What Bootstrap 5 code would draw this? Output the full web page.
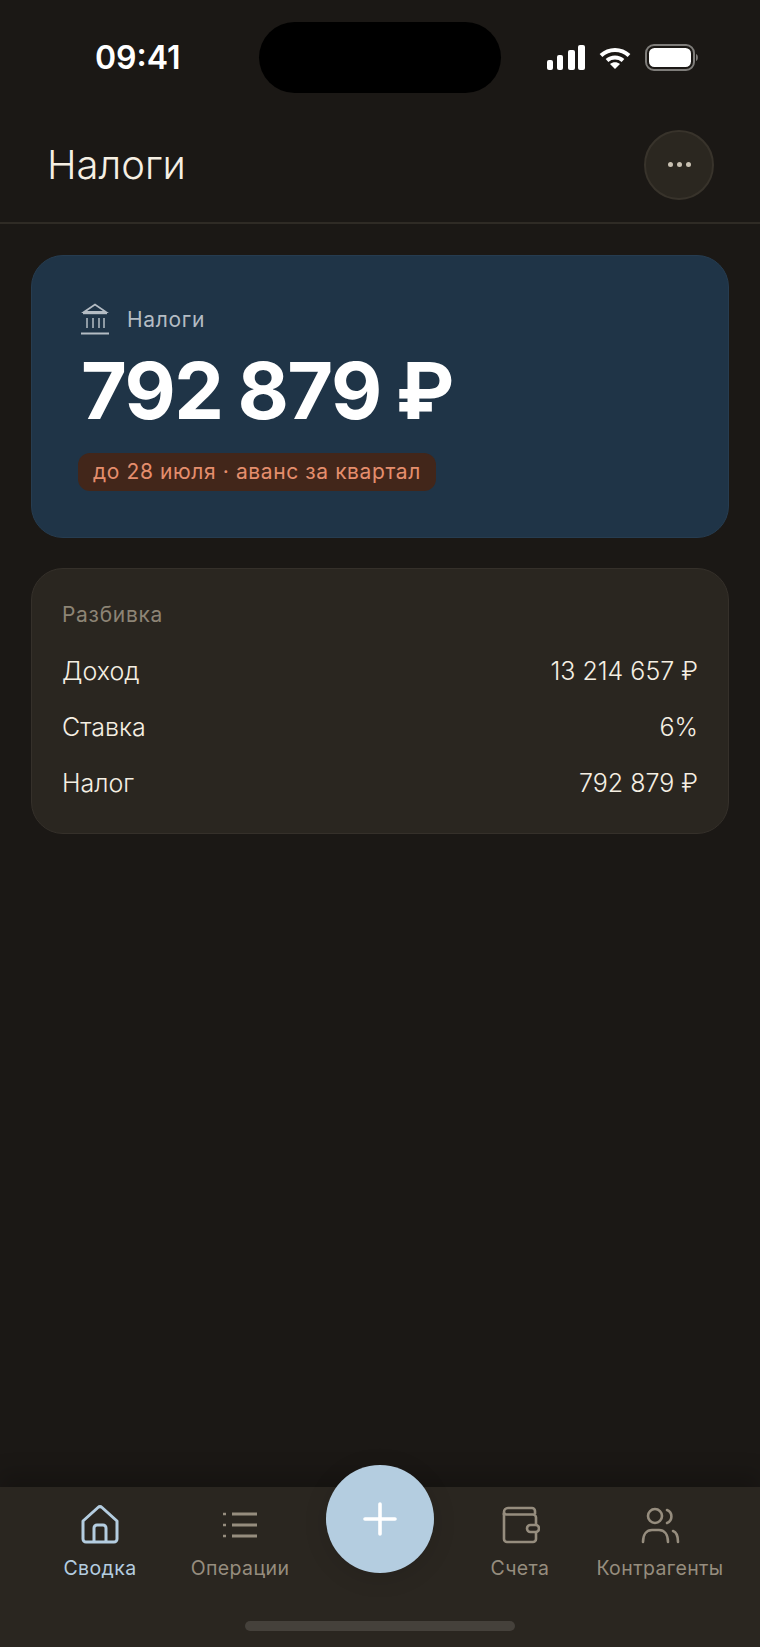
<!DOCTYPE html>
<html lang="ru">
<head>
    <meta charset="UTF-8">
    <meta name="viewport" content="width=device-width, initial-scale=1.0">
    <title>Налоги</title>
    <link href="https://cdn.jsdelivr.net/npm/bootstrap@5.3.0/dist/css/bootstrap.min.css" rel="stylesheet">
    <style>
        body {
            margin: 0;
            background-color: #1b1815;
            font-family: "Inter", "Liberation Sans", sans-serif;
            color: #f5efe3;
        }
        .app-screen { height: 1647px; width: 760px; position: relative; overflow: hidden; }
        .status-row { height: 115px; padding: 0 61px 0 95px; }
        .status-time { font-size: 32px; font-weight: 600; color: #fff; line-height: 1; width: 164px; }
        .island { width: 242px; height: 71px; border-radius: 36px; background: #000; margin-top: -1px; }
        .status-icons { margin-left: auto; gap: 14px; }
        .top-head { height: 109px; padding: 0 47px 8px; border-bottom: 2px solid #2f2b25; }
        .top-title { font-size: 40px; font-weight: 300; margin: 0; line-height: 1; color: #f5efe3; }
        .more-btn { width: 70px; height: 70px; margin-right: -1px; border-radius: 50%; background: #2b2720; border: 2px solid #38332b; padding: 0; gap: 4px; }
        .more-dot { width: 5px; height: 5px; border-radius: 50%; background: #c9c1b2; }
        .page-body { padding: 31px 31px 0; gap: 30px; }
        .tax-card { background: #1f3447; border-radius: 32px; height: 283px; padding: 47px 50px 0 49px; border: 1px solid #263c50; }
        .tax-label { font-size: 21px; letter-spacing: .7px; color: #b4bcc4; gap: 18px; line-height: 1; }
        .tax-sum { font-size: 79px; font-weight: 700; color: #fff; line-height: 1; margin-top: 16px; letter-spacing: -1.6px; word-spacing: -2px; }
        .due-tag { background: #42261a; color: #e58e6d; font-size: 21px; height: 38px; border-radius: 12px; padding: 0 15px; margin: 23px 0 0 -3px; letter-spacing: .6px; }
        .part-card { background: #2a2620; border: 1px solid #35302a; border-radius: 32px; height: 266px; padding: 35px 30px 0 30px; }
        .part-title { font-size: 21px; color: #8d8475; letter-spacing: .7px; line-height: 1; margin-bottom: 19px; }
        .part-row { height: 56px; font-size: 25px; color: #f5efe3; font-weight: 300; }
        .tab-bar { height: 160px; padding: 0 30px; background: #2a2620; box-shadow: 0 -14px 20px rgba(0,0,0,.18); }
        .tab-item { width: 140px; padding-top: 18px; color: #968d7e; font-size: 19.5px; letter-spacing: .4px; line-height: 1; }
        .tab-item.current { color: #b4cde0; }
        .tab-icon { width: 40px; height: 40px; margin-bottom: 14px; display: block; }
        .add-btn { position: absolute; left: 326px; top: 1465px; width: 108px; height: 108px; border-radius: 50%; background: #b4cde0; border: 0; padding: 0; box-shadow: 0 4px 24px rgba(0,0,0,.12); }
        .home-bar { position: absolute; left: 245px; top: 1621px; width: 270px; height: 10px; border-radius: 5px; background: #45413b; }
    </style>
</head>
<body>

<div class="app-screen d-flex flex-column">
    <div class="status-row d-flex align-items-center">
        <div class="status-time">09:41</div>
        <div class="island"></div>
        <div class="status-icons d-flex align-items-center">
            <svg width="38" height="25" viewBox="0 0 38 25" fill="#fff">
                <rect x="0" y="15" width="6" height="10" rx="2"/>
                <rect x="10" y="10" width="6" height="15" rx="2"/>
                <rect x="21" y="5" width="7" height="20" rx="2"/>
                <rect x="31" y="0" width="7" height="25" rx="2"/>
            </svg>
            <svg width="32" height="22" viewBox="0 0 32 22" fill="none" stroke="#fff" stroke-width="4">
                <path d="M2 8.500C10 1 22 1 30 8.500"/>
                <path d="M8 13.500C12.500 9.500 19.500 9.500 24 13.500"/>
                <path d="M16 22l-5-5c3-2.500 7-2.500 10 0z" fill="#fff" stroke="none"/>
            </svg>
            <svg width="54" height="27" viewBox="0 0 54 27">
                <rect x="1" y="1" width="48" height="25" rx="8" fill="none" stroke="#7f7d7a" stroke-width="2"/>
                <rect x="4" y="4" width="42" height="19" rx="5.500" fill="#fff"/>
                <path d="M51 10c2.500 .8 2.500 6.200 0 7z" fill="#7f7d7a"/>
            </svg>
        </div>
    </div>

    <div class="top-head d-flex align-items-center justify-content-between">
        <h1 class="top-title">Налоги</h1>
        <button class="more-btn d-flex align-items-center justify-content-center" type="button" aria-label="Ещё">
            <span class="more-dot"></span><span class="more-dot"></span><span class="more-dot"></span>
        </button>
    </div>

    <div class="page-body d-flex flex-column flex-grow-1">
        <div class="tax-card">
            <div class="tax-label d-flex align-items-center">
                <svg width="28" height="32" viewBox="0 0 28 32" fill="none" stroke="#b4bcc4" stroke-width="1.800">
                    <path d="M3 9 14 1.500 25 9z"/>
                    <path d="M2 10.500h24" stroke-width="1.400"/>
                    <path d="M6 15v10M12 15v10M18 15v10M23 15v10" stroke-width="1.500"/>
                    <path d="M0 30.500h28" stroke-width="2"/>
                </svg>
                <span>Налоги</span>
            </div>
            <div class="tax-sum">792 879 ₽</div>
            <div class="due-tag d-inline-flex align-items-center">до 28 июля · аванс за квартал</div>
        </div>

        <div class="part-card">
            <div class="part-title">Разбивка</div>
            <div class="part-row d-flex align-items-center justify-content-between"><span>Доход</span><span>13 214 657 ₽</span></div>
            <div class="part-row d-flex align-items-center justify-content-between"><span>Ставка</span><span>6%</span></div>
            <div class="part-row d-flex align-items-center justify-content-between"><span>Налог</span><span>792 879 ₽</span></div>
        </div>
    </div>

    <nav class="tab-bar d-flex">
        <div class="tab-item current d-flex flex-column align-items-center">
            <svg class="tab-icon" viewBox="0 0 40 40" fill="none" stroke="#b4cde0" stroke-width="3" stroke-linejoin="round">
                <path d="M3 16 18 2.500a3 3 0 0 1 4 0L37 16v18a3 3 0 0 1-3 3H6a3 3 0 0 1-3-3z"/>
                <path d="M14 37V23a3 3 0 0 1 3-3h6a3 3 0 0 1 3 3v14"/>
            </svg>
            <span>Сводка</span>
        </div>
        <div class="tab-item d-flex flex-column align-items-center">
            <svg class="tab-icon" viewBox="0 0 40 40" fill="none" stroke="#968d7e" stroke-width="3">
                <path d="M12 9h25M12 20h25M12 31h25"/>
                <path d="M3 9h3M3 20h3M3 31h3" stroke-width="2.400"/>
            </svg>
            <span>Операции</span>
        </div>
        <div class="tab-item"></div>
        <div class="tab-item d-flex flex-column align-items-center">
            <svg class="tab-icon" viewBox="0 0 40 40" fill="none" stroke="#968d7e" stroke-width="2.600" stroke-linejoin="round">
                <path d="M4 10V7a4 4 0 0 1 4-4h24a3 3 0 0 1 3 3v3"/>
                <path d="M4 8v26a3 3 0 0 0 3 3h26a3 3 0 0 0 3-3v-7"/>
                <path d="M4 8a3 3 0 0 0 3 1.500h26a3 3 0 0 1 3 3V20"/>
                <rect x="27" y="20" width="12" height="7" rx="3.500"/>
            </svg>
            <span>Счета</span>
        </div>
        <div class="tab-item d-flex flex-column align-items-center">
            <svg class="tab-icon" viewBox="0 0 40 40" fill="none" stroke="#968d7e" stroke-width="2.600" stroke-linecap="round">
                <circle cx="15" cy="11" r="7"/>
                <path d="M3 37c0-8 4-12 9-12h7c5 0 9 4 9 12"/>
                <path d="M27 5a7 7 0 0 1 0 13"/>
                <path d="M33 26c3 1 5 5 5 11"/>
            </svg>
            <span>Контрагенты</span>
        </div>
    </nav>

    <button class="add-btn d-flex align-items-center justify-content-center" type="button" aria-label="Добавить">
        <svg width="34" height="34" viewBox="0 0 34 34" fill="none" stroke="#fff" stroke-width="3.600" stroke-linecap="round">
            <path d="M17 2v30M2 17h30"/>
        </svg>
    </button>
    <div class="home-bar"></div>
</div>

<script src="https://cdn.jsdelivr.net/npm/bootstrap@5.3.0/dist/js/bootstrap.bundle.min.js"></script>
</body>
</html>
